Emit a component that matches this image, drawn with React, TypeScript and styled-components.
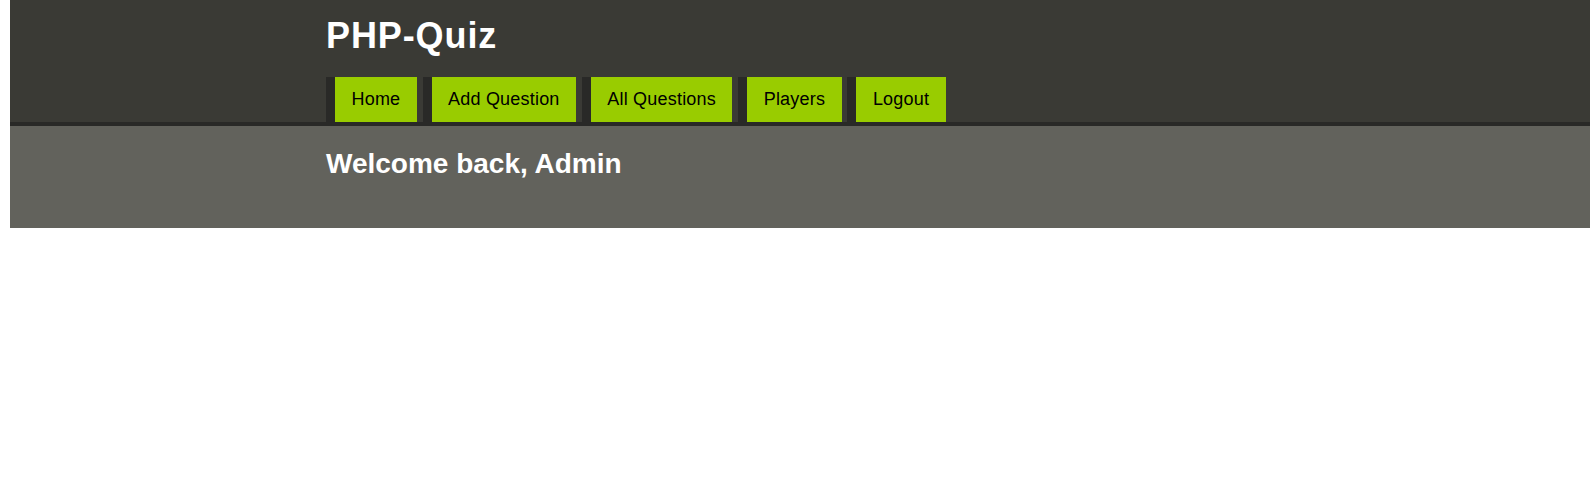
import React from 'react';
import styled, {createGlobalStyle} from 'styled-components';

const navItems = ['Home', 'Add Question', 'All Questions', 'Players', 'Logout'];

export default function App() {
    return (
        <>
            <GlobalStyle/>
            <StyledPage>
                <StyledHeader>
                    <StyledInner>
                        <StyledTitle>PHP-Quiz</StyledTitle>
                        <StyledNav>
                            {navItems.map(item => (
                                <StyledNavItem key={item} href="#">{item}</StyledNavItem>
                            ))}
                        </StyledNav>
                    </StyledInner>
                </StyledHeader>

                <StyledBanner>
                    <StyledInner>
                        <StyledWelcome>Welcome back, Admin</StyledWelcome>
                    </StyledInner>
                </StyledBanner>
            </StyledPage>
        </>
    );
}

const GlobalStyle = createGlobalStyle`
  * {
    box-sizing: border-box;
  }
  body {
    margin: 0 5px 0 10px;
    background: #ffffff;
    font-family: "Liberation Sans", Arial, sans-serif;
  }
`
const StyledPage = styled.div`
  width: 100%;
`
const StyledHeader = styled.header`
  background-color: #3a3a35;
  border-bottom: 4px solid #292927;
  height: 126px;
`
const StyledInner = styled.div`
  width: 948px;
  margin: 0 auto;
`
const StyledTitle = styled.h1`
  margin: 0;
  padding-top: 15px;
  font-size: 36px;
  line-height: 41px;
  font-weight: bold;
  letter-spacing: 0.9px;
  color: #ffffff;
`
const StyledNav = styled.nav`
  display: flex;
  gap: 5.75px;
  margin-top: 21px;
`
const StyledNavItem = styled.a`
  display: block;
  height: 45px;
  line-height: 45px;
  padding: 0 16.5px;
  border-left: 9px solid #292927;
  background-color: #99cc00;
  color: #000000;
  font-size: 18px;
  letter-spacing: 0.2px;
  text-decoration: none;
`
const StyledBanner = styled.section`
  background-color: #62625c;
  height: 102px;
  padding-top: 21px;
`
const StyledWelcome = styled.h2`
  margin: 0;
  font-size: 28px;
  line-height: 33px;
  font-weight: bold;
  color: #ffffff;
`
